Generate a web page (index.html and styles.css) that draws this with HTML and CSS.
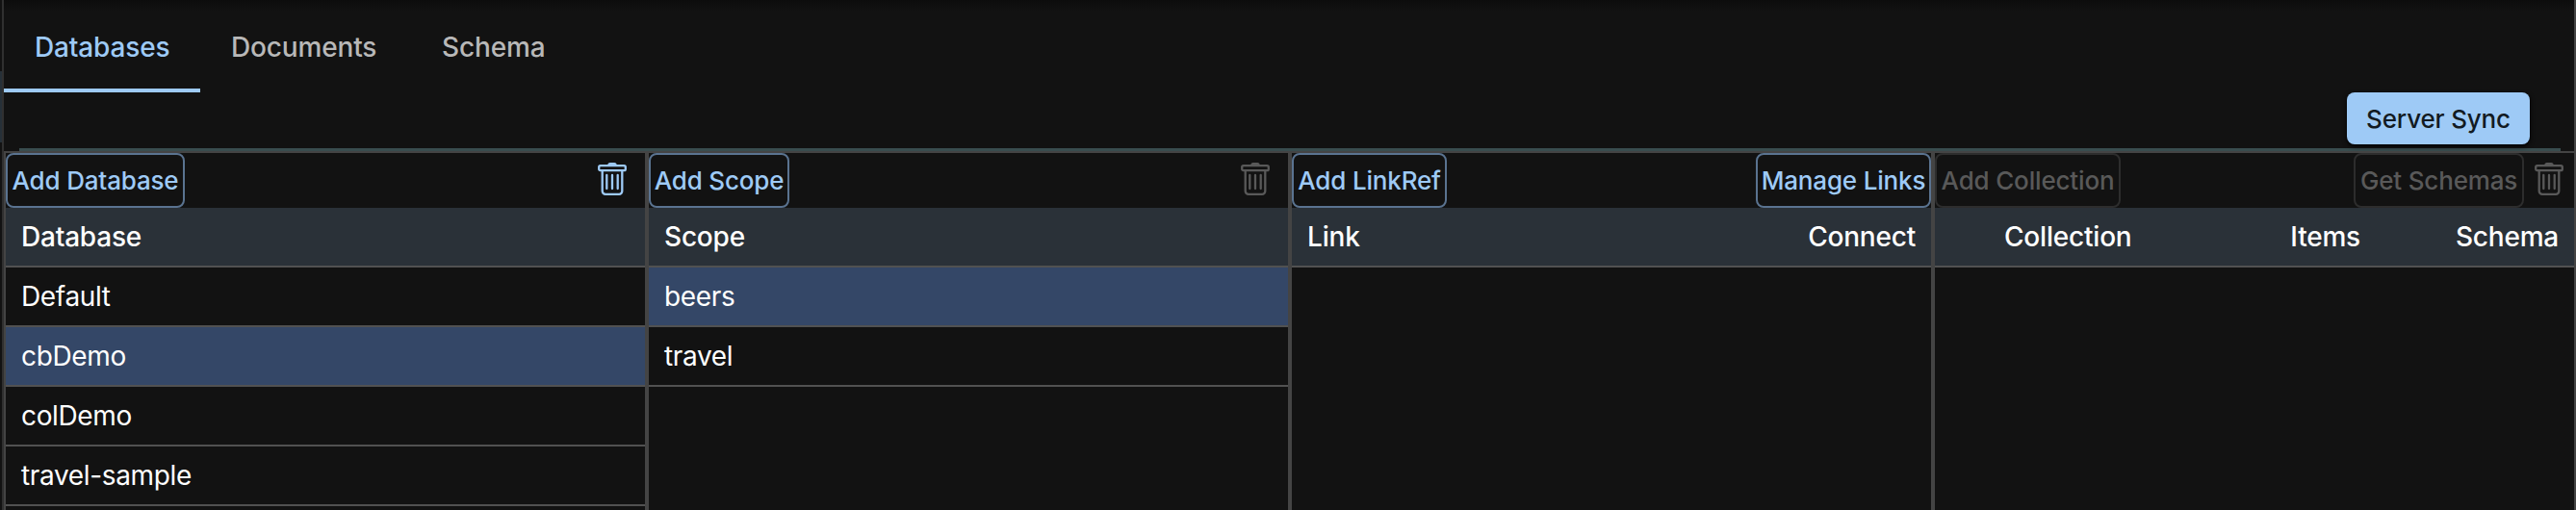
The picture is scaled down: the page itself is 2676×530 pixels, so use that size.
FILE: index.html
```
<!DOCTYPE html>
<html lang="en">
<head>
<meta charset="utf-8">
<title>Databases</title>
<link rel="stylesheet" href="styles.css">
</head>
<body>
<svg width="0" height="0" class="defs" aria-hidden="true">
  <symbol id="trash" viewBox="0 0 30 34">
    <path d="M10 3C10.300 1 11.300 0 12.800 0h4.400C18.700 0 19.700 1 20 3z" fill="currentColor" stroke="none"/>
    <rect x="1.200" y="3.200" width="27.600" height="5" rx="1.500"/>
    <path d="M4.700 8.200v21.400a3.200 3.200 0 0 0 3.200 3.200h14.200a3.200 3.200 0 0 0 3.200-3.200V8.200"/>
    <path d="M9.300 13v14M15 13v14M20.700 13v14" stroke-linecap="round"/>
  </symbol>
</svg>
<div class="app">
  <div class="rail"></div>
  <main class="main">
    <div class="top">
      <nav class="tabs">
        <a class="tab active">Databases</a>
        <a class="tab docs">Documents</a>
        <a class="tab">Schema</a>
      </nav>
      <div class="actions"><button class="sync">Server Sync</button></div>
      <div class="rule"></div>
    </div>
    <div class="columns">
      <section class="column">
        <div class="toolbar"><button class="btn w-db">Add Database</button><svg class="trash"><use href="#trash"/></svg></div>
        <div class="row head">Database</div>
        <div class="row">Default</div>
        <div class="row selected">cbDemo</div>
        <div class="row">colDemo</div>
        <div class="row">travel-sample</div>
      </section>
      <section class="column">
        <div class="toolbar"><button class="btn w-scope">Add Scope</button><svg class="trash off"><use href="#trash"/></svg></div>
        <div class="row head">Scope</div>
        <div class="row selected">beers</div>
        <div class="row">travel</div>
      </section>
      <section class="column">
        <div class="toolbar"><button class="btn w-link">Add LinkRef</button><button class="btn w-manage end">Manage Links</button></div>
        <div class="row head"><span>Link</span><span class="connect">Connect</span></div>
      </section>
      <section class="column">
        <div class="toolbar"><button class="btn w-coll off" disabled>Add Collection</button><button class="btn w-get end off" disabled>Get Schemas</button><svg class="trash off near"><use href="#trash"/></svg></div>
        <div class="row head triple"><span>Collection</span><span class="items">Items</span><span class="schema">Schema</span></div>
      </section>
    </div>
  </main>
</div>
</body>
</html>
```
FILE: styles.css
```
* { box-sizing: border-box; }
body { margin: 0; background: #121212; color: #fff; font-family: Inter, "Liberation Sans", sans-serif; overflow: hidden; }
.defs { display: block; }
.app { display: flex; width: 2676px; height: 530px; }
.rail { flex: none; width: 4px; border-right: 2px solid #303030; background: linear-gradient(#121212 74px, #263038 74px 148px, #121212 148px); }
.main { flex: 1; display: flex; flex-direction: column; min-width: 0; }
.top { border-right: 2px solid #444; background: linear-gradient(#0c0c0c, #121212 12px); }
.tabs { display: flex; height: 96px; }
.tab { display: flex; align-items: center; padding: 6px 32px 0; color: #b8b8b8; border-bottom: 4px solid transparent; font-size: 28px; font-weight: 500; letter-spacing: -0.15px; }
.tab.active { width: 204px; color: #9ecaf6; border-color: #9ecaf6; }
.tab.docs { width: 219px; }
.actions { display: flex; justify-content: flex-end; height: 58px; padding-right: 46px; }
button { margin: 0; padding: 0; font: 500 26px Inter, "Liberation Sans", sans-serif; letter-spacing: -0.17px; white-space: nowrap; }
.sync { width: 190px; height: 54px; border: 0; border-radius: 8px; background: #9ecaf6; color: #121a22; box-shadow: 0 2px 5px #000; }
.rule { height: 3px; margin: 0 14px 0 16px; background: #394d4f; }
.columns { flex: 1; display: grid; grid-template-columns: repeat(4, 668px); }
.column { border: 2px solid #444; border-bottom: 0; }
.toolbar { display: flex; height: 57px; }
.btn { height: 57px; border: 2px solid #5a7390; border-radius: 8px; background: none; color: #9ecaf6; }
.btn.off { color: #595959; border-color: #2d2d2d; }
.w-db { width: 186px; }
.w-scope { width: 146px; }
.w-link { width: 161px; }
.w-manage { width: 182px; }
.w-coll { width: 193px; }
.w-get { width: 177px; }
.end { margin-left: auto; }
.trash { width: 30px; height: 34px; margin: 10px 19px 0 auto; color: #9ecaf6; fill: none; stroke: currentColor; stroke-width: 2.3; }
.trash.off { color: #595959; }
.trash.near { margin: 10px 11px 0; }
.row { display: flex; align-items: center; height: 62px; padding: 0 16px; border-bottom: 2px solid #515151; font-size: 28px; letter-spacing: -0.35px; }
.head { background: #2a3138; font-weight: 500; letter-spacing: -0.2px; }
.selected { background: #344767; }
.connect { margin-left: auto; }
.triple { padding-left: 72px; }
.items { margin-left: auto; }
.schema { width: 206px; text-align: right; }
```
